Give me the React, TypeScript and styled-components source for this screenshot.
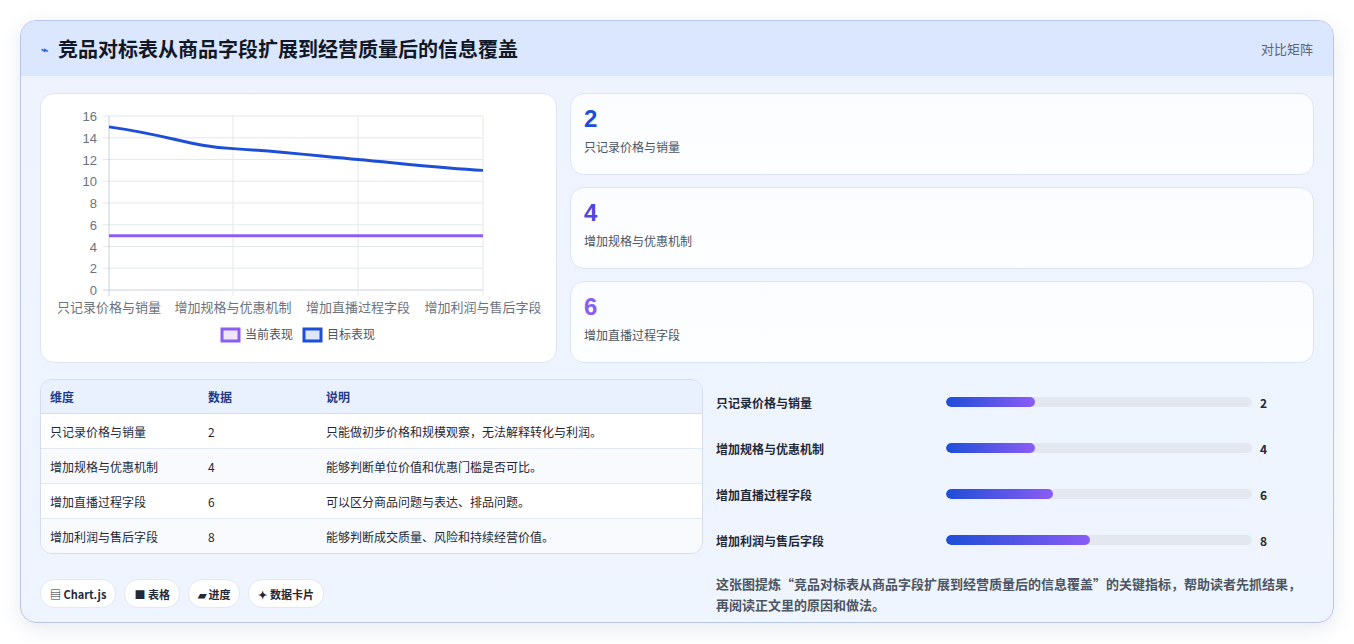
import React from "react";
import styled, { createGlobalStyle } from "styled-components";

const Global = createGlobalStyle`
  html, body { margin: 0; padding: 0; background: #fff; }
  body { font-family: "Noto Sans CJK SC", "Noto Sans", sans-serif; }
`;

const Page = styled.div`
  padding: 20px;
  width: 1354px;
  box-sizing: border-box;
`;
const Card = styled.div`
  border: 1px solid #b9c6ec;
  border-radius: 16px;
  background: linear-gradient(180deg, #eef3fe 0%, #eff5ff 100%);
  overflow: hidden;
  box-shadow: 0 6px 20px rgba(60, 80, 140, 0.12);
  height: 603px;
  box-sizing: border-box;
`;
const Header = styled.div`
  height: 55px;
  background: #dbe7fe;
  display: flex;
  align-items: center;
  justify-content: space-between;
  padding: 0 20px 0 20px;
`;
const Title = styled.div`
  display: flex;
  align-items: center;
  gap: 10px;
  font-size: 20px;
  font-weight: 700;
  color: #111827;
`;
const TitleIcon = styled.span`
  color: #2563eb;
  font-size: 12px;
`;
const HeaderTag = styled.div`
  font-size: 13px;
  color: #5b6478;
`;
const Body = styled.div`
  padding: 17px 19px 0 19px;
  display: flex;
  flex-direction: column;
`;
const TopRow = styled.div`
  display: grid;
  grid-template-columns: 517px 1fr;
  gap: 13px;
`;
const ChartBox = styled.div`
  background: #fff;
  border: 1px solid #dde5f5;
  border-radius: 14px;
  height: 270px;
  box-sizing: border-box;
`;
const Stats = styled.div`
  display: flex;
  flex-direction: column;
  gap: 12px;
`;
const Stat = styled.div`
  height: 82px;
  box-sizing: border-box;
  border: 1px solid #dde5f5;
  border-radius: 14px;
  background: linear-gradient(180deg, #fafcff, #fdfeff);
  padding: 10px 13px;
`;
const StatNum = styled.div<{ $c: string }>`
  font-size: 24px;
  font-weight: 800;
  line-height: 30px;
  color: ${(p) => p.$c};
  font-family: "Liberation Sans", sans-serif;
`;
const StatLabel = styled.div`
  font-size: 12px;
  color: #4b5563;
  margin-top: 4px;
`;
const BottomRow = styled.div`
  display: grid;
  grid-template-columns: 663px 1fr;
  gap: 13px;
  margin-top: 16px;
`;
const Left = styled.div`
  display: flex;
  flex-direction: column;
`;
const Table = styled.table`
  width: 100%;
  border-collapse: separate;
  border-spacing: 0;
  border: 1px solid #d4dced;
  border-radius: 12px;
  overflow: hidden;
  font-size: 12px;
`;
const Th = styled.th`
  text-align: left;
  font-weight: 600;
  color: #1e3a8a;
  background: #eaf1fe;
  height: 33px;
  padding: 0 9px;
  border-bottom: 1px solid #d4dced;
`;
const Td = styled.td<{ $alt: boolean; $last: boolean }>`
  height: 34px;
  padding: 0 9px;
  color: #1f2937;
  background: ${(p) => (p.$alt ? "#f8fafd" : "#ffffff")};
  border-bottom: ${(p) => (p.$last ? "none" : "1px solid #e3e9f4")};
`;
const Pills = styled.div`
  display: flex;
  gap: 8px;
  margin-top: 25px;
`;
const Pill = styled.div`
  height: 27px;
  padding: 0 9px;
  border-radius: 14px;
  background: #fff;
  border: 1px solid #e1e7f3;
  display: flex;
  align-items: center;
  gap: 3px;
  font-size: 11px;
  font-weight: 600;
  color: #1f2937;
`;
const Right = styled.div`
  display: flex;
  flex-direction: column;
`;
const BarRow = styled.div`
  height: 46px;
  display: grid;
  grid-template-columns: 222px 306px auto;
  align-items: center;
  gap: 8px;
  font-size: 12px;
  font-weight: 600;
  color: #1f2937;
`;
const Track = styled.div`
  height: 10px;
  border-radius: 5px;
  background: #e3e8f0;
  overflow: hidden;
`;
const Fill = styled.div`
  height: 100%;
  border-radius: 5px;
  background: linear-gradient(90deg, #1d4ed8, #8b5cf6);
`;
const Desc = styled.div`
  margin-top: 10px;
  font-size: 13px;
  line-height: 21px;
  color: #4b5563;
  font-weight: 600;
  padding-right: 10px;
`;

const cats = ["只记录价格与销量", "增加规格与优惠机制", "增加直播过程字段", "增加利润与售后字段"];
const rows = [
  ["只记录价格与销量", "2", "只能做初步价格和规模观察，无法解释转化与利润。"],
  ["增加规格与优惠机制", "4", "能够判断单位价值和优惠门槛是否可比。"],
  ["增加直播过程字段", "6", "可以区分商品问题与表达、排品问题。"],
  ["增加利润与售后字段", "8", "能够判断成交质量、风险和持续经营价值。"],
];
const bars = [29, 29, 35, 47];

function Chart() {
  const xs = [68, 192, 317, 442];
  const y = (v: number) => 22 + (16 - v) * 10.875;
  return (
    <svg width="515" height="268" viewBox="0 0 515 268">
      {[0, 2, 4, 6, 8, 10, 12, 14, 16].map((v) => (
        <g key={v}>
          <line x1={62} x2={442} y1={y(v)} y2={y(v)} stroke={v === 0 ? "#c9d1de" : "#e3e7ee"} />
          <text x={56} y={y(v) + 5} textAnchor="end" fontSize="13" fill="#6b7280" fontFamily="Liberation Sans, sans-serif">{v}</text>
        </g>
      ))}
      {xs.map((x) => (
        <line key={x} x1={x} x2={x} y1={y(16)} y2={y(0) + 6} stroke={x === 68 ? "#c9d1de" : "#e3e7ee"} />
      ))}
      {cats.map((c, i) => (
        <text key={c} x={xs[i]} y={218} textAnchor="middle" fontSize="13" fill="#6b7280" fontFamily="Noto Sans CJK SC, sans-serif">{c}</text>
      ))}
      <line x1={68} x2={442} y1={y(5)} y2={y(5)} stroke="#8b5cf6" strokeWidth="3" />
      <path d={`M68 ${y(15)} C 130 ${y(14.2)}, 150 ${y(13.2)}, 192 ${y(13)} S 280 ${y(12.3)}, 317 ${y(12)} S 400 ${y(11.2)}, 442 ${y(11)}`} fill="none" stroke="#1d4ed8" strokeWidth="3" />
      <rect x={181} y={235} width={17} height={12} fill="#efe6fe" stroke="#8b5cf6" strokeWidth="3" />
      <text x={204} y={245} fontSize="12" fill="#4b5563" fontFamily="Noto Sans CJK SC, sans-serif">当前表现</text>
      <rect x={263} y={235} width={17} height={12} fill="#dde6fb" stroke="#1d4ed8" strokeWidth="3" />
      <text x={286} y={245} fontSize="12" fill="#4b5563" fontFamily="Noto Sans CJK SC, sans-serif">目标表现</text>
    </svg>
  );
}

export default function App() {
  return (
    <Page>
      <Global />
      <Card>
        <Header>
          <Title>
            <TitleIcon>⌁</TitleIcon>
            竞品对标表从商品字段扩展到经营质量后的信息覆盖
          </Title>
          <HeaderTag>对比矩阵</HeaderTag>
        </Header>
        <Body>
          <TopRow>
            <ChartBox>
              <Chart />
            </ChartBox>
            <Stats>
              <Stat><StatNum $c="#1d4ed8">2</StatNum><StatLabel>只记录价格与销量</StatLabel></Stat>
              <Stat><StatNum $c="#4f46e5">4</StatNum><StatLabel>增加规格与优惠机制</StatLabel></Stat>
              <Stat><StatNum $c="#8b5cf6">6</StatNum><StatLabel>增加直播过程字段</StatLabel></Stat>
            </Stats>
          </TopRow>
          <BottomRow>
            <Left>
              <Table>
                <thead>
                  <tr>
                    <Th style={{ width: 140 }}>维度</Th>
                    <Th style={{ width: 100 }}>数据</Th>
                    <Th>说明</Th>
                  </tr>
                </thead>
                <tbody>
                  {rows.map((r, i) => (
                    <tr key={i}>
                      {r.map((c, j) => (
                        <Td key={j} $alt={i % 2 === 1} $last={i === rows.length - 1}>{c}</Td>
                      ))}
                    </tr>
                  ))}
                </tbody>
              </Table>
              <Pills>
                <Pill>▤ Chart.js</Pill>
                <Pill>■ 表格</Pill>
                <Pill>▰ 进度</Pill>
                <Pill>✦ 数据卡片</Pill>
              </Pills>
            </Left>
            <Right>
              {rows.map((r, i) => (
                <BarRow key={i}>
                  <span>{r[0]}</span>
                  <Track><Fill style={{ width: `${bars[i]}%` }} /></Track>
                  <span>{r[1]}</span>
                </BarRow>
              ))}
              <Desc>这张图提炼“竞品对标表从商品字段扩展到经营质量后的信息覆盖”的关键指标，帮助读者先抓结果，再阅读正文里的原因和做法。</Desc>
            </Right>
          </BottomRow>
        </Body>
      </Card>
    </Page>
  );
}
